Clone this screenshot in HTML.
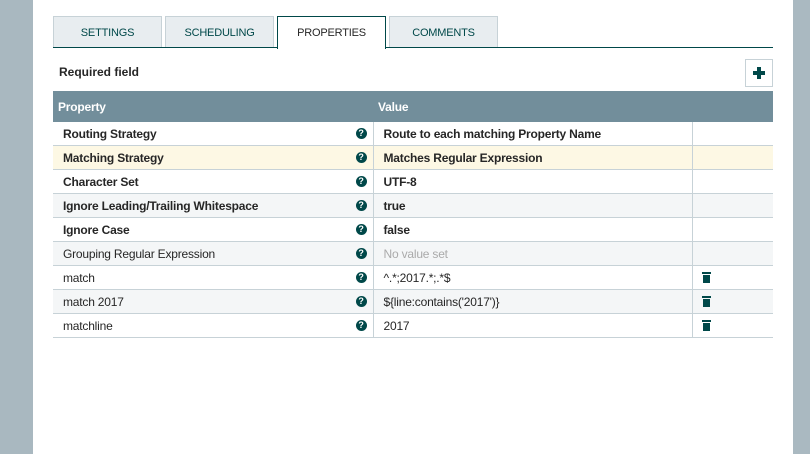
<!DOCTYPE html>
<html><head><style>
body{margin:0;width:810px;height:454px;overflow:hidden;background:#a3b2bb;font-family:"Liberation Sans",sans-serif;position:relative}
.bgl{position:absolute;left:0;top:0;width:33px;height:454px;background:#a9b8c0}
.bgr{position:absolute;left:793px;top:0;width:17px;height:454px;background:#aab9c1}
.dlg{position:absolute;left:33px;top:0;width:760px;height:454px;background:#fff}
.tab{position:absolute;top:16px;height:31px;width:107px;background:#e8edf0;border:1px solid #c7d2d7;border-bottom:none;font-size:11px;color:#004849;text-align:center;line-height:32px;letter-spacing:-0.2px}
.tab.a{background:#fff;border:1px solid #004849;border-bottom:none;height:32px;color:#262626;z-index:2}
.line{position:absolute;left:53px;top:47px;width:720px;height:1px;background:#004849}
.req{position:absolute;left:59px;top:65px;font-size:12px;font-weight:bold;color:#262626}
.add{position:absolute;left:745px;top:59px;width:26px;height:26px;border:1px solid #c7d2d7;background:#fff}
.add:before{content:"";position:absolute;left:7px;top:11px;width:12px;height:4px;background:#004849}
.add:after{content:"";position:absolute;left:11px;top:7px;width:4px;height:12px;background:#004849}
table{position:absolute;left:53px;top:91px;width:720px;border-collapse:collapse;font-size:12px;color:#262626;letter-spacing:-0.2px}
th{background:#728e9b;color:#fff;text-align:left;height:31px;padding:0 0 0 5px;font-weight:bold}
td{height:23px;border-bottom:1px solid #c7d2d7;padding:0 0 0 10px;position:relative}
td+td{border-left:1px solid #c7d2d7}
tr.g td{background:#f4f6f7}
tr.y td{background:#fdf8e4}
tr.b td{font-weight:bold}
.q{position:absolute;right:6px;top:6px;width:11px;height:11px;border-radius:50%;background:#004849;color:#fff;font-size:9px;font-weight:bold;line-height:11px;text-align:center}
.nv{color:#aaa}
.tr{display:inline-block;width:7px;height:8px;background:#004849;position:relative;top:1px;margin-left:0}
.tr:before{content:"";position:absolute;left:-1px;top:-3px;width:9px;height:2px;background:#004849}
</style></head><body>
<div class="bgl"></div><div class="bgr"></div>
<div class="dlg"></div>
<div class="tab" style="left:53px">SETTINGS</div>
<div class="tab" style="left:165px">SCHEDULING</div>
<div class="tab a" style="left:277px">PROPERTIES</div>
<div class="tab" style="left:389px">COMMENTS</div>
<div class="line"></div>
<div class="req">Required field</div>
<div class="add"></div>
<table>
<tr><th style="width:315px">Property</th><th style="width:314px;padding-left:5px">Value</th><th></th></tr>
<tr class="b"><td>Routing Strategy<span class="q">?</span></td><td>Route to each matching Property Name</td><td></td></tr>
<tr class="b y"><td>Matching Strategy<span class="q">?</span></td><td>Matches Regular Expression</td><td></td></tr>
<tr class="b"><td>Character Set<span class="q">?</span></td><td>UTF-8</td><td></td></tr>
<tr class="b g"><td>Ignore Leading/Trailing Whitespace<span class="q">?</span></td><td>true</td><td></td></tr>
<tr class="b"><td>Ignore Case<span class="q">?</span></td><td>false</td><td></td></tr>
<tr class="g"><td>Grouping Regular Expression<span class="q">?</span></td><td class="nv">No value set</td><td></td></tr>
<tr><td>match<span class="q">?</span></td><td>^.*;2017.*;.*$</td><td><span class="tr"></span></td></tr>
<tr class="g"><td>match 2017<span class="q">?</span></td><td>${line:contains('2017')}</td><td><span class="tr"></span></td></tr>
<tr><td>matchline<span class="q">?</span></td><td>2017</td><td><span class="tr"></span></td></tr>
</table>
</body></html>
